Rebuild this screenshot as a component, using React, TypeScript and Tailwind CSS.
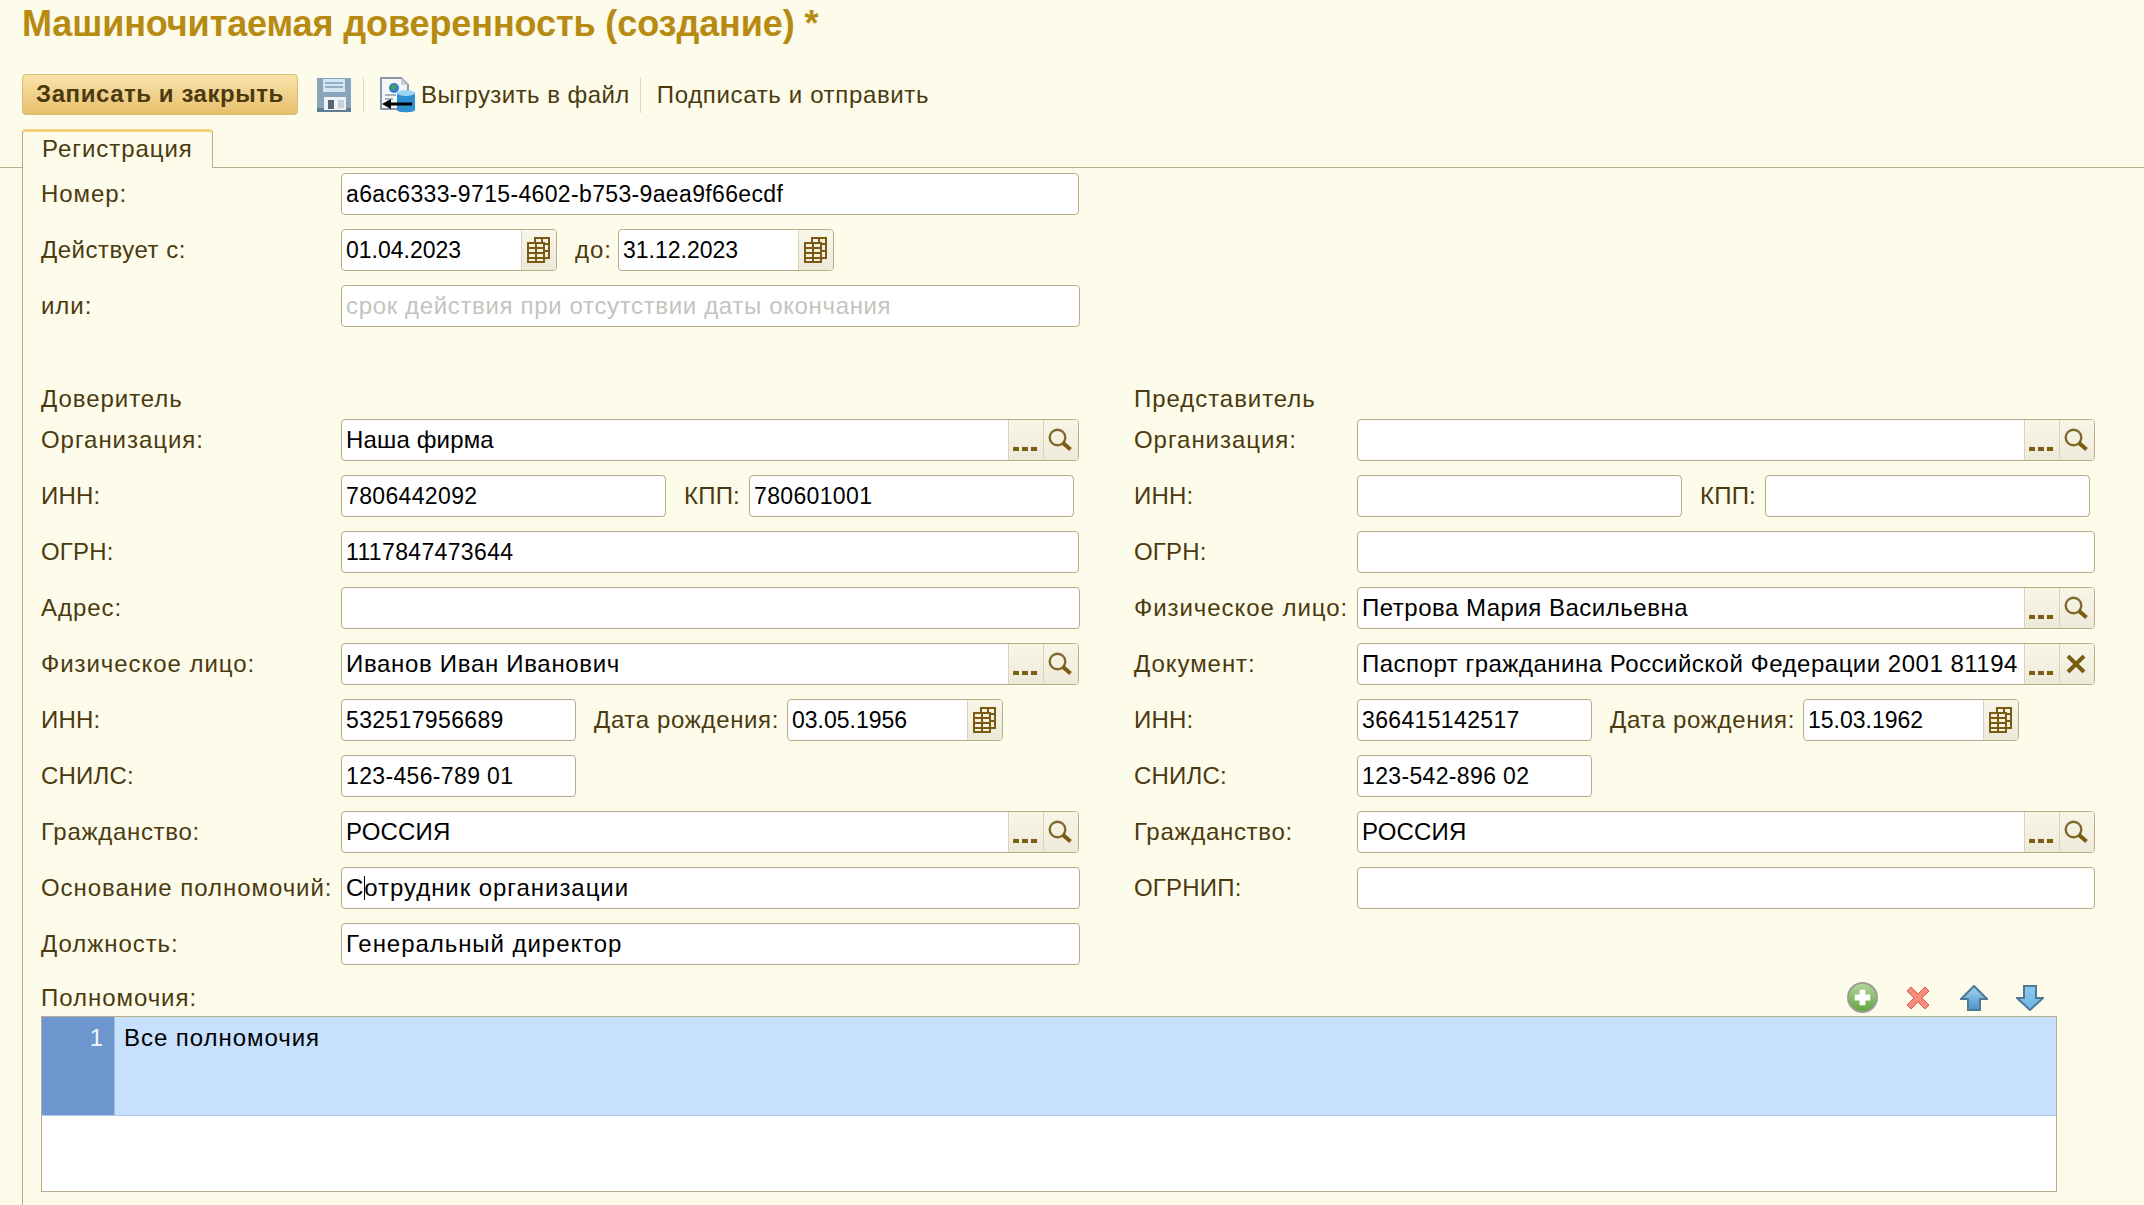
import React from 'react';
import clsx from 'clsx';

const FONT = "font-['Liberation_Sans',Arial,sans-serif]";

const DotsIcon = () => (
  <svg width="24" height="6" viewBox="0 0 24 6">
    <rect x="0" y="1" width="6" height="4" fill="#7d5f12" />
    <rect x="9" y="1" width="6" height="4" fill="#7d5f12" />
    <rect x="18" y="1" width="6" height="4" fill="#7d5f12" />
  </svg>
);

const SearchIcon = () => (
  <svg width="24" height="24" viewBox="0 0 24 24" fill="none">
    <circle cx="9.5" cy="9.5" r="7.8" stroke="#7d6a2c" strokeWidth="2.4" />
    <path d="M15 15l7.5 6.5" stroke="#7a5c10" strokeWidth="4" />
  </svg>
);

const CrossIcon = () => (
  <svg width="20" height="18" viewBox="0 0 20 18" fill="none">
    <path d="M2 1l16 16M18 1L2 17" stroke="#7a5c10" strokeWidth="4" />
  </svg>
);

const CalendarIcon = () => (
  <svg width="23" height="26" viewBox="0 0 23 26" fill="none" stroke="#7a5a10" strokeWidth="2">
    <path d="M8 5V1h14v20h-5" />
    <path d="M15 1v4M22 7h-5M22 14h-5" />
    <rect x="1" y="6" width="16" height="19" fill="#f5f1de" />
    <path d="M1 11h16M1 16h16M1 21h16M9 6v19" />
  </svg>
);

const SaveIcon = () => (
  <svg width="34" height="34" viewBox="0 0 34 34">
    <rect x="0" y="0" width="34" height="34" fill="#8aa5bb" />
    <rect x="0" y="30" width="34" height="4" fill="#5f7c95" />
    <rect x="6" y="1" width="22" height="13" fill="#d6e6f1" />
    <path d="M8 5h18M8 9h18" stroke="#8fb0c9" strokeWidth="2" />
    <rect x="7" y="19" width="22" height="13" fill="#eef2f4" />
    <rect x="11" y="22" width="6" height="9" fill="#53677a" />
    <rect x="21" y="22" width="6" height="8" fill="#c9d2d9" />
  </svg>
);

const ExportIcon = () => (
  <svg width="36" height="36" viewBox="0 0 36 36">
    <path d="M1 1h20l7 7v24H1z" fill="#f4f6f8" stroke="#8996a6" strokeWidth="2" />
    <path d="M21 1v7h7" fill="#c8d0da" />
    <circle cx="14" cy="11" r="5" fill="#2f7fd0" />
    <path d="M11 9l3-2 2 3-2 3-3-1z" fill="#4fa33a" />
    <path d="M5 18h11M5 22h8" stroke="#a8b3c0" strokeWidth="2" />
    <path d="M17 16c0-2 18-2 18 0v17c0 3-18 3-18 0z" fill="#2f8fd0" />
    <ellipse cx="26" cy="16" rx="9" ry="3" fill="#9fd3f2" />
    <path d="M8 27h24" stroke="#000" strokeWidth="3" />
    <path d="M2 27l9-5v10z" fill="#000" />
  </svg>
);

const AddIcon = () => (
  <svg width="33" height="33" viewBox="0 0 32 32">
    <defs>
      <linearGradient id="addFill" x1="0" y1="0" x2="0" y2="1">
        <stop offset="0" stopColor="#b6d69c" />
        <stop offset="1" stopColor="#5fa53f" />
      </linearGradient>
    </defs>
    <circle cx="16" cy="16" r="15" fill="url(#addFill)" stroke="#9b9f95" strokeWidth="2" />
    <path d="M13 8h6v5h5v6h-5v5h-6v-5H8v-6h5z" fill="#fff" />
  </svg>
);

const RemoveIcon = () => (
  <svg width="24" height="24" viewBox="0 0 24 24">
    <path d="M1 5l4-4 7 7 7-7 4 4-7 7 7 7-4 4-7-7-7 7-4-4 7-7z" fill="#f58d7a" stroke="#e2574a" strokeWidth="1" />
  </svg>
);

const UpIcon = () => (
  <svg width="28" height="26" viewBox="0 0 28 26">
    <defs>
      <linearGradient id="upFill" x1="0" y1="0" x2="0" y2="1">
        <stop offset="0" stopColor="#a3d5f5" />
        <stop offset="1" stopColor="#4f94c4" />
      </linearGradient>
    </defs>
    <path d="M14 1l13 13h-7v11H8V14H1z" fill="url(#upFill)" stroke="#4f7896" strokeWidth="2" />
  </svg>
);

const DownIcon = () => (
  <svg width="28" height="26" viewBox="0 0 28 26">
    <defs>
      <linearGradient id="downFill" x1="0" y1="0" x2="0" y2="1">
        <stop offset="0" stopColor="#8cc8ef" />
        <stop offset="1" stopColor="#6cb4e6" />
      </linearGradient>
    </defs>
    <path d="M8 1h12v12h7L14 25 1 13h7z" fill="url(#downFill)" stroke="#4f7896" strokeWidth="2" />
  </svg>
);

const Label = ({ className, children }: { className?: string; children: React.ReactNode }) => (
  <div className={clsx('shrink-0 whitespace-nowrap text-[#4b3a0f]', className)}>{children}</div>
);

const FieldButton = ({ children, end }: { children: React.ReactNode; end?: boolean }) => (
  <div
    className={clsx(
      'flex h-full w-[35px] shrink-0 justify-center border-l border-[#d9d3b8] bg-gradient-to-b from-[#f8f6e8] to-[#eeeada] pr-[2px]',
      end ? 'items-end pb-[8px]' : 'items-center',
    )}
  >
    {children}
  </div>
);

const Field = ({
  className,
  value,
  placeholder,
  tight,
  date,
  children,
}: {
  className: string;
  value?: React.ReactNode;
  placeholder?: string;
  tight?: boolean;
  date?: boolean;
  children?: React.ReactNode;
}) => (
  <div className={clsx('flex h-[42px] shrink-0 overflow-hidden rounded-[4px] border border-[#b8ae8a] bg-white', className)}>
    <div
      className={clsx(
        'ml-[4px] mr-[5px] flex min-w-0 flex-1 items-center overflow-hidden whitespace-nowrap',
        placeholder ? 'text-[#c4c4bf] tracking-[0.65px]' : 'text-black',
        tight && 'text-[23px] tracking-[0.35px]',
        date && 'text-[23px] tracking-[0px]',
      )}
    >
      {value ?? placeholder}
    </div>
    {children}
  </div>
);

const Lookup = ({ className, value, clear }: { className: string; value?: string; clear?: boolean }) => (
  <Field className={className} value={value}>
    <FieldButton end>
      <DotsIcon />
    </FieldButton>
    <FieldButton>{clear ? <CrossIcon /> : <SearchIcon />}</FieldButton>
  </Field>
);

const DateField = ({ className, value }: { className: string; value: string }) => (
  <Field className={className} value={value} date>
    <FieldButton>
      <CalendarIcon />
    </FieldButton>
  </Field>
);

const Row = ({ children }: { children: React.ReactNode }) => <div className="flex h-[42px] items-center">{children}</div>;

const Representative = () => (
  <div className="ml-[54px] w-[961px]">
    <div className="mb-[7px] flex h-[28px] items-center pt-[2px] text-[#4b3a0f]">Представитель</div>
    <div className="flex flex-col gap-[14px]">
      <Row>
        <Label className="w-[223px]">Организация:</Label>
        <Lookup className="w-[738px]" />
      </Row>
      <Row>
        <Label className="w-[223px] tracking-[0.2px]">ИНН:</Label>
        <Field className="w-[325px]" />
        <Label className="ml-[18px] w-[65px] tracking-[0.2px]">КПП:</Label>
        <Field className="w-[325px]" />
      </Row>
      <Row>
        <Label className="w-[223px] tracking-[0.2px]">ОГРН:</Label>
        <Field className="w-[738px]" />
      </Row>
      <Row>
        <Label className="w-[223px]">Физическое лицо:</Label>
        <Lookup className="w-[738px] tracking-[0.5px]" value="Петрова Мария Васильевна" />
      </Row>
      <Row>
        <Label className="w-[223px]">Документ:</Label>
        <Lookup className="w-[738px] tracking-[0.5px]" value="Паспорт гражданина Российской Федерации 2001 811943" clear />
      </Row>
      <Row>
        <Label className="w-[223px] tracking-[0.2px]">ИНН:</Label>
        <Field className="w-[235px]" value="366415142517" tight />
        <Label className="ml-[18px] w-[193px] tracking-[0.65px]">Дата рождения:</Label>
        <DateField className="w-[216px]" value="15.03.1962" />
      </Row>
      <Row>
        <Label className="w-[223px] tracking-[0.2px]">СНИЛС:</Label>
        <Field className="w-[235px]" value="123-542-896 02" tight />
      </Row>
      <Row>
        <Label className="w-[223px] tracking-[0.7px]">Гражданство:</Label>
        <Lookup className="w-[738px] tracking-[0.2px]" value="РОССИЯ" />
      </Row>
      <Row>
        <Label className="w-[223px] tracking-[0.2px]">ОГРНИП:</Label>
        <Field className="w-[738px]" />
      </Row>
    </div>
  </div>
);

const Principal = () => (
  <div className="w-[1039px]">
    <div className="mb-[7px] flex h-[28px] items-center pt-[2px] text-[#4b3a0f]">Доверитель</div>
    <div className="flex flex-col gap-[14px]">
      <Row>
        <Label className="w-[300px]">Организация:</Label>
        <Lookup className="w-[738px] tracking-[0.15px]" value="Наша фирма" />
      </Row>
      <Row>
        <Label className="w-[300px] tracking-[0.2px]">ИНН:</Label>
        <Field className="w-[325px]" value="7806442092" tight />
        <Label className="ml-[18px] w-[65px] tracking-[0.2px]">КПП:</Label>
        <Field className="w-[325px]" value="780601001" tight />
      </Row>
      <Row>
        <Label className="w-[300px] tracking-[0.2px]">ОГРН:</Label>
        <Field className="w-[738px]" value="1117847473644" tight />
      </Row>
      <Row>
        <Label className="w-[300px]">Адрес:</Label>
        <Field className="w-[739px]" />
      </Row>
      <Row>
        <Label className="w-[300px]">Физическое лицо:</Label>
        <Lookup className="w-[738px] tracking-[0.68px]" value="Иванов Иван Иванович" />
      </Row>
      <Row>
        <Label className="w-[300px] tracking-[0.2px]">ИНН:</Label>
        <Field className="w-[235px]" value="532517956689" tight />
        <Label className="ml-[18px] w-[193px] tracking-[0.65px]">Дата рождения:</Label>
        <DateField className="w-[216px]" value="03.05.1956" />
      </Row>
      <Row>
        <Label className="w-[300px] tracking-[0.2px]">СНИЛС:</Label>
        <Field className="w-[235px]" value="123-456-789 01" tight />
      </Row>
      <Row>
        <Label className="w-[300px] tracking-[0.7px]">Гражданство:</Label>
        <Lookup className="w-[738px] tracking-[0.2px]" value="РОССИЯ" />
      </Row>
      <Row>
        <Label className="w-[300px]">Основание полномочий:</Label>
        <Field
          className="w-[739px]"
          value={
            <>
              С<span className="-mr-px inline-block h-[24px] w-px bg-black" />отрудник организации
            </>
          }
        />
      </Row>
      <Row>
        <Label className="w-[300px]">Должность:</Label>
        <Field className="w-[739px]" value="Генеральный директор" />
      </Row>
    </div>
  </div>
);

export default function App() {
  return (
    <div className={clsx('h-[1205px] w-[2144px] overflow-hidden bg-[#fdfbea] text-[24px] tracking-[0.95px]', FONT)}>
      <h1 className="flex h-[47px] items-center pl-[22px] text-[36px] font-bold tracking-[-0.1px] text-[#b78a12]">
        Машиночитаемая доверенность (создание) *
      </h1>

      <div className="mt-[27px] flex h-[41px] items-center pl-[22px] tracking-[0.45px] text-[#4b3a0f]">
        <div className="flex h-[41px] w-[276px] items-center justify-center rounded-[4px] border border-[#d8bd78] bg-gradient-to-b from-[#f9e3ac] to-[#e7bf6a] pb-[1px] font-bold tracking-[0.55px] text-[#4b3a0f]">
          Записать и закрыть
        </div>
        <div className="ml-[19px] flex items-center">
          <SaveIcon />
        </div>
        <div className="ml-[12px] h-[36px] w-px bg-[#dcd7bf]" />
        <div className="ml-[16px] flex items-center">
          <ExportIcon />
        </div>
        <span className="ml-[5px]">Выгрузить в файл</span>
        <div className="ml-[10px] h-[36px] w-px bg-[#dcd7bf]" />
        <span className="ml-[16px] tracking-[0.65px]">Подписать и отправить</span>
      </div>

      <div className="mt-[14px] flex h-[39px] border-b border-[#b8ae8a] pl-[22px]">
        <div className="-mb-px flex h-[39px] w-[191px] items-center rounded-t-[4px] border border-b-0 border-t-[3px] border-[#b8ae8a] border-t-[#f3cf80] bg-[#fdfbea] pb-[3px] pl-[19px] text-[#4b3a0f]">
          Регистрация
        </div>
      </div>

      <div className="ml-[22px] h-[1037px] border-l border-[#b8ae8a] pl-[18px] pt-[5px]">
        <div className="flex flex-col gap-[14px]">
          <Row>
            <Label className="w-[300px]">Номер:</Label>
            <Field className="w-[738px]" value="a6ac6333-9715-4602-b753-9aea9f66ecdf" tight />
          </Row>
          <Row>
            <Label className="w-[300px] tracking-[0.5px]">Действует с:</Label>
            <DateField className="w-[216px]" value="01.04.2023" />
            <Label className="ml-[18px] w-[43px]">до:</Label>
            <DateField className="w-[216px]" value="31.12.2023" />
          </Row>
          <Row>
            <Label className="w-[300px]">или:</Label>
            <Field className="w-[739px]" placeholder="срок действия при отсутствии даты окончания" />
          </Row>
        </div>

        <div className="mt-[57px] flex">
          <Principal />
          <Representative />
        </div>

        <div className="mt-[16px] flex h-[35px] w-[2016px] items-center justify-between pr-[11px]">
          <Label className="pb-[2px]">Полномочия:</Label>
          <div className="-mt-[2px] flex items-center gap-[24px]">
            <div className="flex w-[32px] justify-center pl-[1px]"><AddIcon /></div>
            <div className="flex w-[32px] justify-center"><RemoveIcon /></div>
            <div className="flex w-[32px] justify-center"><UpIcon /></div>
            <div className="flex w-[32px] justify-center"><DownIcon /></div>
          </div>
        </div>

        <div className="h-[176px] w-[2016px] border border-[#b8ae8a] bg-white">
          <div className="flex h-[99px] border-b border-[#aec8ea] bg-[#c7e0fe]">
            <div className="w-[73px] border-r border-[#a3bfe4] bg-[#6e97cf] pr-[10px] pt-[3px] text-right text-[#f2f6fb]">1</div>
            <div className="pl-[9px] pt-[3px] text-black">Все полномочия</div>
          </div>
        </div>
      </div>
    </div>
  );
}
